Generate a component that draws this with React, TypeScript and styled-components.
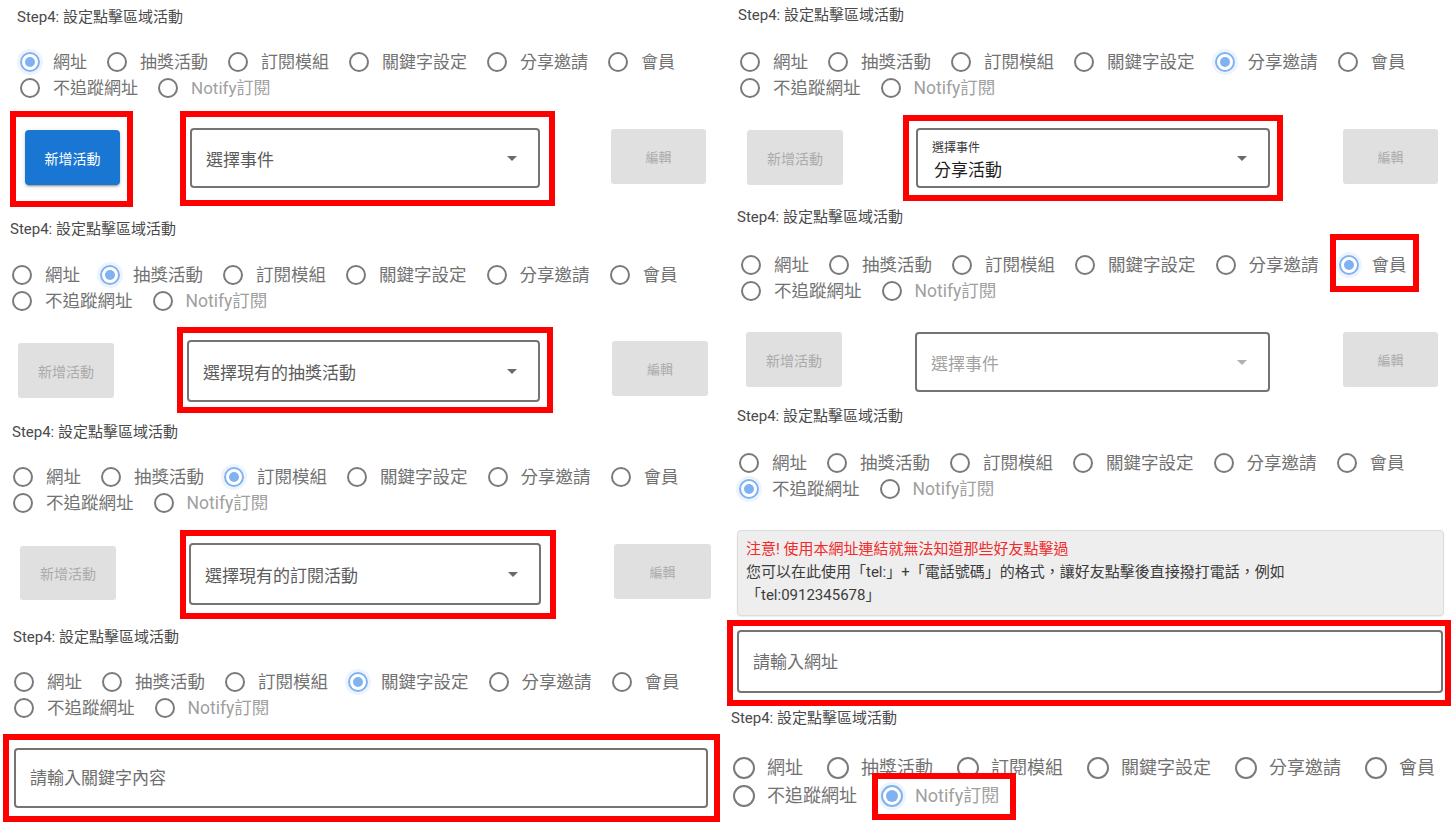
import React from 'react';
import styled, { createGlobalStyle } from 'styled-components';

const GlobalStyle = createGlobalStyle`
  html, body { margin: 0; padding: 0; background: #ffffff; }
  body {
    font-family: Roboto, "Noto Sans CJK TC", "Noto Sans", sans-serif;
    overflow: hidden;
  }
  * { box-sizing: border-box; }
`;

type SizeKey = 'sm' | 'md' | 'lg';
const SIZES: Record<SizeKey, { fs: number; circle: number; lgap: number; igap: number; row: number }> = {
  sm: { fs: 17, circle: 20, lgap: 13, igap: 20, row: 26 },
  md: { fs: 17.5, circle: 20, lgap: 13, igap: 20, row: 26 },
  lg: { fs: 18, circle: 22, lgap: 12, igap: 24, row: 28 },
};

const Page = styled.main`
  display: grid;
  grid-template-columns: 725px 726px;
  width: 1451px;
  height: 822px;
  overflow: hidden;
`;

const Column = styled.div`
  display: flex;
  flex-direction: column;
`;

const Panel = styled.section<{ $h: number; $pt: number }>`
  flex: 0 0 auto;
  height: ${(p) => p.$h}px;
  padding-top: ${(p) => p.$pt}px;
  display: flex;
  flex-direction: column;
  align-items: flex-start;
`;

const Title = styled.div<{ $ml: number }>`
  margin-left: ${(p) => p.$ml}px;
  font-size: 15px;
  line-height: 20px;
  color: #4a4a4a;
  white-space: nowrap;
`;

const RadioGroup = styled.div<{ $ml: number; $mt: number }>`
  margin-left: ${(p) => p.$ml}px;
  margin-top: ${(p) => p.$mt}px;
  display: flex;
  flex-direction: column;
`;

const RadioRow = styled.div<{ $size: SizeKey }>`
  display: flex;
  height: ${(p) => SIZES[p.$size].row}px;
`;

const RadioItem = styled.label<{ $size: SizeKey }>`
  position: relative;
  display: flex;
  align-items: center;
  margin-right: ${(p) => SIZES[p.$size].igap}px;
`;

const Circle = styled.span<{ $size: SizeKey; $checked: boolean }>`
  position: relative;
  flex: none;
  width: ${(p) => SIZES[p.$size].circle}px;
  height: ${(p) => SIZES[p.$size].circle}px;
  border-radius: 50%;
  border: 2px solid ${(p) => (p.$checked ? '#80b1f3' : '#7a7a7a')};
  box-shadow: ${(p) => (p.$checked ? '0 0 0 3px rgba(128, 177, 243, 0.14)' : 'none')};
  &::after {
    content: '';
    position: absolute;
    inset: 3px;
    border-radius: 50%;
    background: ${(p) => (p.$checked ? '#80b1f3' : 'transparent')};
  }
`;

const Label = styled.span<{ $size: SizeKey; $muted: boolean }>`
  margin-left: ${(p) => SIZES[p.$size].lgap}px;
  font-size: ${(p) => SIZES[p.$size].fs}px;
  line-height: 1.2;
  color: ${(p) => (p.$muted ? '#a0a0a0' : '#727272')};
  white-space: nowrap;
`;

const Mark = styled.span<{ $t: number; $r: number; $b: number; $l: number }>`
  position: absolute;
  top: ${(p) => p.$t}px;
  right: ${(p) => p.$r}px;
  bottom: ${(p) => p.$b}px;
  left: ${(p) => p.$l}px;
  border: 6px solid #ff0000;
  pointer-events: none;
`;

const ActionRow = styled.div<{ $mt: number }>`
  display: flex;
  align-items: flex-start;
  margin-top: ${(p) => p.$mt}px;
`;

const Highlight = styled.div<{ $ml?: number; $mt?: number; $pad: string }>`
  flex: none;
  margin-left: ${(p) => p.$ml ?? 0}px;
  margin-top: ${(p) => p.$mt ?? 0}px;
  padding: ${(p) => p.$pad};
  border: 6px solid #ff0000;
`;

const PrimaryButton = styled.button`
  display: block;
  width: 95px;
  height: 55px;
  border: 0;
  border-radius: 4px;
  background: #1976d2;
  color: #ffffff;
  font-family: inherit;
  font-size: 14px;
  font-weight: 400;
  box-shadow: 0 3px 1px -2px rgba(0, 0, 0, 0.2), 0 2px 2px 0 rgba(0, 0, 0, 0.14),
    0 1px 5px 0 rgba(0, 0, 0, 0.12);
`;

const MutedButton = styled.button<{ $w: number; $h: number; $ml: number; $mt?: number; $fs?: number }>`
  flex: none;
  width: ${(p) => p.$w}px;
  height: ${(p) => p.$h}px;
  margin-left: ${(p) => p.$ml}px;
  margin-top: ${(p) => p.$mt ?? 0}px;
  border: 0;
  border-radius: 3px;
  background: #e0e0e0;
  color: #ababab;
  font-family: inherit;
  font-size: ${(p) => p.$fs ?? 14}px;
`;

const SelectBox = styled.div<{ $w: number; $h: number; $ml?: number; $mt?: number }>`
  flex: none;
  display: flex;
  align-items: center;
  justify-content: space-between;
  width: ${(p) => p.$w}px;
  height: ${(p) => p.$h}px;
  margin-left: ${(p) => p.$ml ?? 0}px;
  margin-top: ${(p) => p.$mt ?? 0}px;
  padding-left: 14px;
  padding-right: 14px;
  border: 2px solid #747474;
  border-radius: 4px;
  background: #ffffff;
`;

const SelectText = styled.span<{ $disabled?: boolean }>`
  font-size: 17px;
  color: ${(p) => (p.$disabled ? '#a3a3a3' : '#5c5c5c')};
  white-space: nowrap;
`;

const FilledValue = styled.div`
  display: flex;
  flex-direction: column;
  padding-top: 4px;
`;

const FloatLabel = styled.span`
  font-size: 12px;
  line-height: 16px;
  color: #3a3a3a;
`;

const ValueText = styled.span`
  margin-top: 3px;
  margin-left: 2px;
  font-size: 17px;
  line-height: 22px;
  color: #1e1e1e;
`;

const ArrowIcon = styled.svg<{ $disabled?: boolean }>`
  flex: none;
  width: 24px;
  height: 24px;
  fill: ${(p) => (p.$disabled ? '#b0b0b0' : '#6a6a6a')};
`;

const TextInput = styled.input<{ $w: number; $h: number }>`
  display: block;
  width: ${(p) => p.$w}px;
  height: ${(p) => p.$h}px;
  padding: 0 14px;
  border: 2px solid #747474;
  border-radius: 4px;
  background: #ffffff;
  font-family: inherit;
  font-size: 17px;
  outline: none;
  &::placeholder {
    color: #6e6e6e;
    opacity: 1;
  }
`;

const Notice = styled.div`
  margin-left: 12px;
  margin-top: 28px;
  width: 707px;
  height: 86px;
  padding: 7px 8px;
  background: #eeeeee;
  border: 1px solid #dcdcdc;
  border-radius: 4px;
  box-shadow: 0 1px 2px rgba(0, 0, 0, 0.08);
  font-size: 15px;
  line-height: 23px;
  color: #3c3c3c;
`;

const Warn = styled.div`
  color: #f02b2b;
`;

const ROW1 = ['網址', '抽獎活動', '訂閱模組', '關鍵字設定', '分享邀請', '會員'];
const ROW2 = ['不追蹤網址', 'Notify訂閱'];

type MarkSpec = { index: number; t: number; r: number; b: number; l: number };

function Radios({
  selected,
  size,
  ml,
  mt,
  mark,
}: {
  selected: number;
  size: SizeKey;
  ml: number;
  mt: number;
  mark?: MarkSpec;
}) {
  const renderItem = (label: string, index: number) => (
    <RadioItem key={label} $size={size}>
      <Circle $size={size} $checked={index === selected} />
      <Label $size={size} $muted={label.startsWith('Notify')}>
        {label}
      </Label>
      {mark && mark.index === index && <Mark $t={mark.t} $r={mark.r} $b={mark.b} $l={mark.l} />}
    </RadioItem>
  );
  return (
    <RadioGroup $ml={ml} $mt={mt}>
      <RadioRow $size={size}>{ROW1.map((l, i) => renderItem(l, i))}</RadioRow>
      <RadioRow $size={size}>{ROW2.map((l, i) => renderItem(l, i + 6))}</RadioRow>
    </RadioGroup>
  );
}

function Arrow({ disabled }: { disabled?: boolean }) {
  return (
    <ArrowIcon viewBox="0 0 24 24" $disabled={disabled}>
      <path d="M7 10l5 5 5-5z" />
    </ArrowIcon>
  );
}

const TITLE = 'Step4: 設定點擊區域活動';

export default function App() {
  return (
    <>
      <GlobalStyle />
      <Page>
        <Column>
          <Panel $h={205} $pt={7}>
            <Title $ml={17}>{TITLE}</Title>
            <Radios selected={0} size="sm" ml={20} mt={22} />
            <ActionRow $mt={10}>
              <Highlight $ml={10} $pad="13px 7px 16px 9px">
                <PrimaryButton>新增活動</PrimaryButton>
              </Highlight>
              <Highlight $ml={47} $pad="11px 9px 12px 4px">
                <SelectBox $w={350} $h={60}>
                  <SelectText>選擇事件</SelectText>
                  <Arrow />
                </SelectBox>
              </Highlight>
              <MutedButton $w={95} $h={55} $ml={56} $mt={18} $fs={13}>
                編輯
              </MutedButton>
            </ActionRow>
          </Panel>

          <Panel $h={210} $pt={14}>
            <Title $ml={10}>{TITLE}</Title>
            <Radios selected={1} size="md" ml={12} mt={23} />
            <ActionRow $mt={13}>
              <MutedButton $w={96} $h={55} $ml={18} $mt={16}>
                新增活動
              </MutedButton>
              <Highlight $ml={63} $pad="7px 7px 5px 4px">
                <SelectBox $w={353} $h={62}>
                  <SelectText>選擇現有的抽獎活動</SelectText>
                  <Arrow />
                </SelectBox>
              </Highlight>
              <MutedButton $w={96} $h={55} $ml={59} $mt={14} $fs={13}>
                編輯
              </MutedButton>
            </ActionRow>
          </Panel>

          <Panel $h={205} $pt={7}>
            <Title $ml={12}>{TITLE}</Title>
            <Radios selected={2} size="md" ml={13} mt={22} />
            <ActionRow $mt={14}>
              <MutedButton $w={96} $h={54} $ml={20} $mt={16}>
                新增活動
              </MutedButton>
              <Highlight $ml={64} $pad="7px 9px 8px 3px">
                <SelectBox $w={352} $h={62}>
                  <SelectText>選擇現有的訂閱活動</SelectText>
                  <Arrow />
                </SelectBox>
              </Highlight>
              <MutedButton $w={97} $h={55} $ml={58} $mt={14} $fs={13}>
                編輯
              </MutedButton>
            </ActionRow>
          </Panel>

          <Panel $h={202} $pt={7}>
            <Title $ml={13}>{TITLE}</Title>
            <Radios selected={3} size="md" ml={14} mt={22} />
            <ActionRow $mt={13}>
              <Highlight $ml={3} $pad="8px 6px 8px 5px">
                <TextInput $w={694} $h={60} placeholder="請輸入關鍵字內容" readOnly />
              </Highlight>
            </ActionRow>
          </Panel>
        </Column>

        <Column>
          <Panel $h={203} $pt={5}>
            <Title $ml={13}>{TITLE}</Title>
            <Radios selected={4} size="md" ml={15} mt={24} />
            <ActionRow $mt={14}>
              <MutedButton $w={96} $h={55} $ml={22} $mt={15}>
                新增活動
              </MutedButton>
              <Highlight $ml={60} $pad="7px">
                <SelectBox $w={354} $h={60}>
                  <FilledValue>
                    <FloatLabel>選擇事件</FloatLabel>
                    <ValueText>分享活動</ValueText>
                  </FilledValue>
                  <Arrow />
                </SelectBox>
              </Highlight>
              <MutedButton $w={95} $h={55} $ml={60} $mt={14} $fs={13}>
                編輯
              </MutedButton>
            </ActionRow>
          </Panel>

          <Panel $h={202} $pt={4}>
            <Title $ml={12}>{TITLE}</Title>
            <Radios
              selected={5}
              size="md"
              ml={16}
              mt={25}
              mark={{ index: 5, t: -18, r: -12, b: -14, l: -9 }}
            />
            <ActionRow $mt={28}>
              <MutedButton $w={96} $h={55} $ml={21}>
                新增活動
              </MutedButton>
              <SelectBox $w={355} $h={60} $ml={73}>
                <SelectText $disabled>選擇事件</SelectText>
                <Arrow disabled />
              </SelectBox>
              <MutedButton $w={95} $h={55} $ml={73} $fs={13}>
                編輯
              </MutedButton>
            </ActionRow>
          </Panel>

          <Panel $h={303} $pt={1}>
            <Title $ml={12}>{TITLE}</Title>
            <Radios selected={6} size="md" ml={14} mt={24} />
            <Notice>
              <Warn>注意! 使用本網址連結就無法知道那些好友點擊過</Warn>
              <div>您可以在此使用「tel:」+「電話號碼」的格式，讓好友點擊後直接撥打電話，例如</div>
              <div>「tel:0912345678」</div>
            </Notice>
            <ActionRow $mt={4}>
              <Highlight $ml={2} $pad="4px 2px 7px 4px">
                <TextInput $w={706} $h={63} placeholder="請輸入網址" readOnly />
              </Highlight>
            </ActionRow>
          </Panel>

          <Panel $h={114} $pt={0}>
            <Title $ml={6}>{TITLE}</Title>
            <Radios
              selected={7}
              size="lg"
              ml={8}
              mt={26}
              mark={{ index: 7, t: -9, r: -17, b: -10, l: -9 }}
            />
          </Panel>
        </Column>
      </Page>
    </>
  );
}
